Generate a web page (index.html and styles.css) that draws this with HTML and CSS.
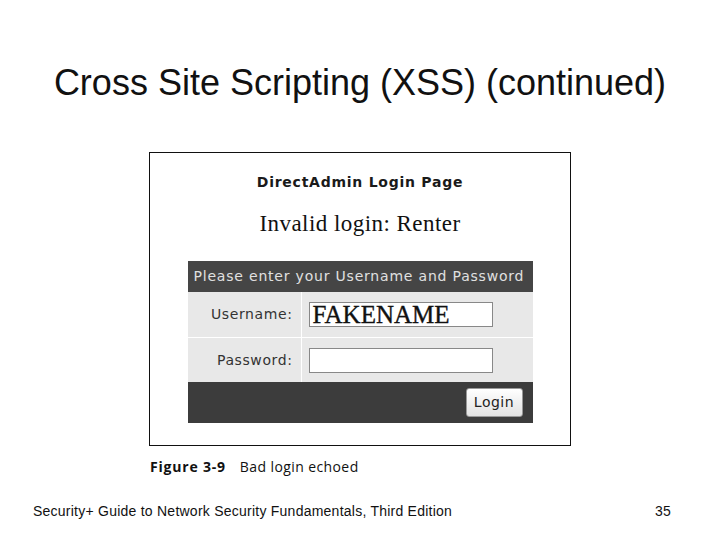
FILE: index.html
```html
<!DOCTYPE html>
<html>
<head>
<meta charset="utf-8">
<link rel="stylesheet" href="styles.css">
</head>
<body>
<div class="slide">
  <h1 class="title">Cross Site Scripting (XSS) (continued)</h1>
  <div class="figure">
    <div class="da-title">DirectAdmin Login Page</div>
    <div class="invalid">Invalid login: Renter</div>
    <div class="login">
      <div class="login-head">Please enter your Username and Password</div>
      <div class="row row-user">
        <div class="label">Username:</div>
        <div class="field"><div class="input">FAKENAME</div></div>
      </div>
      <div class="row row-pass">
        <div class="label">Password:</div>
        <div class="field"><div class="input"></div></div>
      </div>
      <div class="login-foot"><div class="btn">Login</div></div>
    </div>
  </div>
  <div class="caption"><span class="fig-num">Figure 3-9</span><span class="fig-text">Bad login echoed</span></div>
  <div class="footer"><span>Security+ Guide to Network Security Fundamentals, Third Edition</span><span>35</span></div>
</div>
</body>
</html>
```
FILE: styles.css
```css
html, body { margin: 0; padding: 0; background: #fff; }
.slide { width: 720px; height: 540px; position: relative; overflow: hidden; display: flex; flex-direction: column; align-items: center; }
.title { margin: 58px 0 0; font-family: "Liberation Sans", Arial, sans-serif; font-weight: normal; font-size: 36px; line-height: 50px; color: #111; text-align: center; }
.figure { margin-top: 44px; width: 420px; height: 292px; border: 1px solid #111; display: flex; flex-direction: column; align-items: center; box-sizing: content-box; }
.da-title { margin-top: 20px; font-family: "DejaVu Sans", Verdana, sans-serif; font-weight: bold; font-size: 14px; letter-spacing: 0.75px; line-height: 18px; color: #1a1a1a; }
.invalid { margin-top: 20px; font-family: "Liberation Serif", "Times New Roman", serif; font-size: 23px; letter-spacing: 0.45px; line-height: 26px; color: #111; }
.login { margin-top: 24px; width: 345px; display: flex; flex-direction: column; }
.login-head { height: 31px; background: #454545; color: #e0e0e0; font-family: "DejaVu Sans", Verdana, sans-serif; font-size: 14px; letter-spacing: 0.8px; line-height: 31px; padding-left: 6px; white-space: nowrap; }
.row { display: flex; background: #e8e8e8; }
.row-user { height: 45px; border-bottom: 1px solid #fff; }
.row-pass { height: 44px; }
.label { width: 114px; border-right: 1px solid #fff; text-align: right; padding-right: 8px; box-sizing: border-box; font-family: "DejaVu Sans", Verdana, sans-serif; font-size: 14px; letter-spacing: 0.6px; line-height: 45px; color: #333; }
.field { flex: 1; display: flex; align-items: center; padding-left: 7px; }
.input { width: 179px; height: 23px; background: #fff; border: 1px solid #888; font-family: "Liberation Serif", "Times New Roman", serif; font-size: 25px; line-height: 24px; color: #111; padding-left: 3px; box-sizing: content-box; -webkit-text-stroke: 0.35px #111; }
.login-foot { height: 41px; background: #3c3c3c; display: flex; justify-content: flex-end; align-items: center; padding-right: 10px; }
.btn { width: 55px; height: 27px; border: 1px solid #999; border-radius: 3px; background: linear-gradient(#ffffff, #e2e2e2); font-family: "DejaVu Sans", Verdana, sans-serif; font-size: 14px; letter-spacing: 0.5px; line-height: 27px; text-align: center; color: #222; }
.caption { align-self: flex-start; margin: 11px 0 0 150px; font-family: "Open Sans", "Noto Sans", sans-serif; font-size: 14px; letter-spacing: 0.4px; line-height: 20px; color: #111; }
.fig-num { font-weight: bold; letter-spacing: 0.8px; margin-right: 14px; }
.footer { align-self: stretch; display: flex; justify-content: space-between; margin: 25px 49px 0 33px; font-family: "Liberation Sans", Arial, sans-serif; font-size: 14px; letter-spacing: 0.24px; line-height: 18px; color: #111; }
```
